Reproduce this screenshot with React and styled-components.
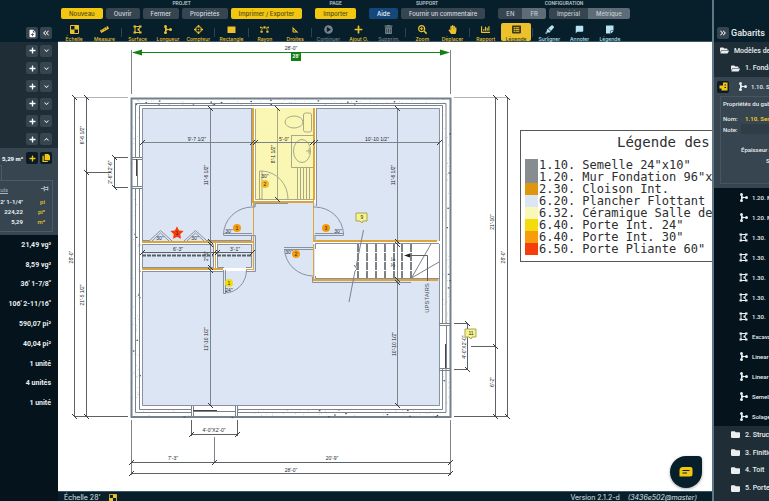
import React from "react";
import styled, { createGlobalStyle, css } from "styled-components";
import {
  FaRuler,
  FaBezierCurve,
  FaPlayCircle,
  FaPlus,
  FaTrashAlt,
  FaSearchPlus,
  FaHandPaper,
  FaChartBar,
  FaListAlt,
  FaHighlighter,
  FaFolder,
  FaFolderOpen,
} from "react-icons/fa";
import {
  MdNoteAdd,
  MdKeyboardDoubleArrowLeft,
  MdKeyboardDoubleArrowRight,
  MdKeyboardArrowDown,
  MdKeyboardArrowUp,
  MdSquareFoot,
  MdChatBubble,
  MdOutlinePushPin,
} from "react-icons/md";

const c = {
  navy: "#071f2b",
  deep: "#05141c",
  row: "#1f2e36",
  slate: "#36454f",
  slateLight: "#5d6c76",
  yellow: "#f3c70f",
  tool: "#ecc12c",
  sky: "#b9e3f5",
  text: "#e9eef1",
  edge: "#5f7684",
  blue: "#dce5f4",
  ink: "#4a5158",
  orange: "#dfa437",
};

const GlobalStyle = createGlobalStyle`
  * { box-sizing: border-box; }
  html, body, #root { height: 100%; }
  body { margin: 0; font-family: Roboto, "Liberation Sans", sans-serif; background: ${c.navy}; color: ${c.text}; }
  button, input { font: inherit; color: inherit; margin: 0; padding: 0; border: 0; }
  button { cursor: pointer; }
  svg { display: block; flex: none; }
`;

/* ---------- shell ---------- */

const Page = styled.div`
  display: grid;
  grid-template-columns: 58px minmax(0, 1fr) 57px;
  height: 100vh;
  overflow: hidden;
`;

const Side = styled.aside`
  display: flex;
  flex-direction: column;
  min-width: 0;
  overflow: hidden;
  background: ${(p) => (p.$right ? c.row : c.deep)};
`;

const SideHead = styled.header`
  display: flex;
  align-items: flex-end;
  flex: none;
  gap: 2px;
  height: 42px;
  padding: 0 6px 3px 3px;
  background: ${c.navy};
  justify-content: ${(p) => (p.$start ? "flex-start" : "flex-end")};
`;

const SideTitle = styled.h1`
  margin: 0;
  font-size: 9px;
  line-height: 12px;
  font-weight: 500;
`;

const Center = styled.main`
  display: flex;
  flex-direction: column;
  min-width: 0;
`;

const IconButton = styled.button`
  display: grid;
  place-items: center;
  flex: none;
  width: 12px;
  height: 12px;
  border-radius: 2px;
  background: ${(p) => (p.$dark ? "#0b1c26" : c.slate)};
  color: ${(p) => (p.$dark ? c.yellow : "#fff")};
`;

/* ---------- top bar ---------- */

const TopBar = styled.header`
  flex: none;
  height: 42px;
  padding-left: 1px;
  border-bottom: 1px solid #3d5663;
`;

const Groups = styled.div`
  display: flex;
  gap: 13px;
  padding-left: 2px;
`;

const Group = styled.section`
  display: flex;
  flex-direction: column;
  align-items: center;
`;

const GroupName = styled.h2`
  margin: 0;
  padding-top: 1px;
  height: 8px;
  font-size: 5px;
  line-height: 5px;
  font-weight: 500;
  color: #c3cdd3;
`;

const GroupRow = styled.div`
  display: flex;
  gap: 3px;
`;

const tones = {
  plain: css`background: ${c.slate}; color: #d5dce0;`,
  yellow: css`background: ${c.yellow}; color: #4d4a1d;`,
  blue: css`background: #14477a; color: #f0f5fa;`,
};

const Button = styled.button`
  height: 11px;
  padding: 0 8px;
  border-radius: 2px;
  font-family: Inter, Roboto, sans-serif;
  font-size: 6px;
  line-height: 11px;
  font-weight: 500;
  white-space: nowrap;
  ${(p) => tones[p.$tone || "plain"]}
`;

const Segments = styled.div`
  display: flex;
  overflow: hidden;
  border-radius: 2px;
`;

const Segment = styled(Button)`
  border-radius: 0;
  color: #c3ccd1;
  background: ${(p) => (p["aria-pressed"] ? c.slateLight : c.slate)};
`;

const Toolbar = styled.nav`
  display: flex;
  align-items: stretch;
  max-width: 566px;
  height: 18px;
  margin-top: 4px;
`;

const Tool = styled.button`
  display: flex;
  flex: 1 1 0;
  flex-direction: column;
  align-items: center;
  gap: 2px;
  min-width: 0;
  padding-top: 2px;
  border-radius: 2px;
  background: ${(p) => (p.$active ? c.tool : "transparent")};
  color: ${(p) => (p.$active ? "#3c3a18" : p.$tone === "sky" ? c.sky : c.tool)};
  font-family: Inter, Roboto, sans-serif;
  font-size: 5px;
  line-height: 6px;
  font-weight: 500;
  white-space: nowrap;
  &:disabled { color: #76838a; }
`;

const Divider = styled.span`
  flex: none;
  align-self: center;
  width: 1px;
  height: 9px;
  margin: 0 1px;
  background: #2b4450;
`;

/* ---------- tool icons ---------- */

const Icon = ({ children, size = 9 }) => (
  <svg width={size} height={size} viewBox="0 0 18 18" fill="currentColor" aria-hidden="true">{children}</svg>
);
const ScaleIcon = ({ size = 9 }) => (
  <Icon size={size}>
    <path d="M1 1h16v16H1z" fill="none" stroke="currentColor" strokeWidth="2" />
    <path d="M9 1h8v8H9zM1 9h8v8H1z" />
  </Icon>
);
const SurfaceIcon = ({ size = 9 }) => (
  <Icon size={size}>
    <path d="M4 3h11l-4 6 4 6H4z" fill="none" stroke="currentColor" strokeWidth="2" />
    <path d="M1 1h5v4H1zM12 1h5v4h-5zM1 13h5v4H1zM12 13h5v4h-5zM9 7h4v4H9z" />
  </Icon>
);
const LengthIcon = ({ size = 9 }) => (
  <Icon size={size}>
    <path d="M5 3v12M5 9h9" fill="none" stroke="currentColor" strokeWidth="2" />
    <circle cx="5" cy="3" r="3" /><circle cx="5" cy="15" r="3" /><circle cx="15" cy="9" r="3" />
    <path d="M5 5l6 4-6 4z" />
  </Icon>
);
const CounterIcon = () => (
  <Icon>
    <circle cx="9" cy="9" r="6" fill="none" stroke="currentColor" strokeWidth="2" />
    <path d="M9 0v5M9 13v5M0 9h5M13 9h5" stroke="currentColor" strokeWidth="3" />
    <circle cx="9" cy="9" r="1.5" />
  </Icon>
);
const RectIcon = () => <Icon><path d="M1 3h16v13H1z" /></Icon>;
const NoteIcon = () => <Icon><path d="M2 1h15v10h-6v6H2zM12 12h5l-5 5z" /></Icon>;
const CopyIcon = () => (
  <Icon size={8}><path d="M6 0h8l4 4v10H6zM1 4h3v12h9v2H1z" /></Icon>
);
const TemplateIcon = () => (
  <Icon size={9}><path d="M8 1h9v16H5v-4H1V7h7zM11 5v2h3V5zM11 10v2h3v-2z" fillRule="evenodd" /></Icon>
);

const tools = [
  [["Échelle", ScaleIcon], ["Measure", FaRuler]],
  [["Surface", SurfaceIcon], ["Longueur", LengthIcon], ["Compteur", CounterIcon]],
  [["Rectangle", RectIcon]],
  [["Rayon", FaBezierCurve], ["Droites", MdSquareFoot]],
  [["Continuer", FaPlayCircle, "off"], ["Ajout O.", FaPlus], ["Supprim.", FaTrashAlt, "off"]],
  [["Zoom", FaSearchPlus], ["Déplacer", FaHandPaper]],
  [["Rapport", FaChartBar], ["Légende", FaListAlt, "active"]],
  [["Surligner", FaHighlighter, "sky"], ["Annoter", MdChatBubble, "sky"], ["Légende", NoteIcon, "sky"]],
];

function Header() {
  return (
    <TopBar>
      <Groups>
        <Group>
          <GroupName>PROJET</GroupName>
          <GroupRow>
            <Button $tone="yellow">Nouveau</Button>
            <Button>Ouvrir</Button>
            <Button>Fermer</Button>
            <Button>Propriétés</Button>
            <Button $tone="yellow">Imprimer / Exporter</Button>
          </GroupRow>
        </Group>
        <Group>
          <GroupName>PAGE</GroupName>
          <GroupRow><Button $tone="yellow">Importer</Button></GroupRow>
        </Group>
        <Group>
          <GroupName>SUPPORT</GroupName>
          <GroupRow>
            <Button $tone="blue">Aide</Button>
            <Button>Fournir un commentaire</Button>
          </GroupRow>
        </Group>
        <Group>
          <GroupName>CONFIGURATION</GroupName>
          <GroupRow>
            <Segments role="group" aria-label="Langue">
              <Segment aria-pressed={false}>EN</Segment>
              <Segment aria-pressed={true}>FR</Segment>
            </Segments>
            <Segments role="group" aria-label="Unités">
              <Segment aria-pressed={false}>Impérial</Segment>
              <Segment aria-pressed={true}>Métrique</Segment>
            </Segments>
          </GroupRow>
        </Group>
      </Groups>
      <Toolbar>
        {tools.map((set, i) => (
          <React.Fragment key={i}>
            {i > 0 && <Divider />}
            {set.map(([name, Glyph, state]) => (
              <Tool key={name} $active={state === "active"} $tone={state} disabled={state === "off"}>
                <Glyph size={9} />
                {name}
              </Tool>
            ))}
          </React.Fragment>
        ))}
      </Toolbar>
    </TopBar>
  );
}

/* ---------- left panel ---------- */

const FolderRows = styled.ul`
  display: grid;
  grid-auto-rows: 1fr;
  flex: none;
  height: ${(p) => p.$height}px;
  margin: 0;
  padding: 0;
  list-style: none;
  background: ${c.row};
`;

const ActionRow = styled.li`
  display: flex;
  align-items: center;
  justify-content: flex-end;
  gap: 2px;
  padding-right: 6px;
`;

const Selected = styled.section`
  flex: none;
  height: 87px;
  padding-top: 4px;
  background: ${c.slate};
`;

const SelectedRow = styled.div`
  display: flex;
  align-items: center;
  justify-content: flex-end;
  gap: 2px;
  padding-right: 6px;
  font-size: 6px;
  font-weight: 700;
  white-space: nowrap;
`;

const Amount = styled.strong`
  margin-right: 1px;
`;

const CalcTab = styled.div`
  width: 2px;
  height: 15px;
  margin-top: 1px;
  border-right: 1px solid #4c5c66;
  border-top: 1px solid #4c5c66;
`;

const CalcBox = styled.div`
  height: 52px;
  margin-right: 5px;
  padding: 3px 3px 0 0;
  border: 1px solid #4c5c66;
  border-left: 0;
`;

const CalcHead = styled.div`
  display: flex;
  justify-content: space-between;
  height: 13px;
`;

const CalcLink = styled.a`
  display: flex;
  justify-content: flex-end;
  width: 8px;
  font-size: 6px;
  line-height: 11px;
  color: #aab6bd;
`;

const PinIcon = styled(MdOutlinePushPin)`
  color: #c9d2d7;
  transform: rotate(90deg);
`;

const CalcTable = styled.table`
  width: 100%;
  border-collapse: collapse;
  font-size: 6px;
  line-height: 10px;
  font-weight: 700;
  td { padding: 0; text-align: right; white-space: nowrap; }
  td:first-child { width: 23px; }
  td:last-child { padding-right: 4px; color: ${c.tool}; font-weight: 500; }
`;

const Totals = styled.ul`
  display: grid;
  grid-auto-rows: 1fr;
  flex: none;
  height: 178px;
  margin: 0;
  padding: 0 7px 0 0;
  list-style: none;
  text-align: right;
  font-size: 7px;
  font-weight: 700;
  white-space: nowrap;
`;

const Total = styled.li`
  display: flex;
  align-items: center;
  justify-content: flex-end;
`;

const totals = ["21,49 vg²", "8,59 vg²", "36' 1-7/8\"", "106' 2-11/16\"", "590,07 pi²", "40,04 pi²", "1 unité", "4 unités", "1 unité"];
const calcs = [["2' 1-1/4\"", "pi"], ["224,22", "pi²"], ["5,29", "m³"]];

function LeftPanel() {
  return (
    <Side>
      <SideHead>
        <IconButton aria-label="Ajouter un document"><MdNoteAdd size={9} /></IconButton>
        <IconButton aria-label="Réduire"><MdKeyboardDoubleArrowLeft size={10} /></IconButton>
      </SideHead>
      <FolderRows $height={106}>
        {[0, 1, 2, 3, 4, 5].map((n) => (
          <ActionRow key={n}>
            <IconButton aria-label="Ajouter"><FaPlus size={7} /></IconButton>
            <IconButton aria-label="Ouvrir ou fermer">
              {n === 5 ? <MdKeyboardArrowUp size={9} /> : <MdKeyboardArrowDown size={9} />}
            </IconButton>
          </ActionRow>
        ))}
      </FolderRows>
      <Selected>
        <SelectedRow>
          <Amount>5,29 m³</Amount>
          <IconButton $dark aria-label="Ajouter"><FaPlus size={7} /></IconButton>
          <IconButton $dark aria-label="Copier"><CopyIcon /></IconButton>
        </SelectedRow>
        <CalcTab />
        <CalcBox>
          <CalcHead>
            <CalcLink href="#calculs">Calculs</CalcLink>
            <PinIcon size={9} />
          </CalcHead>
          <CalcTable>
            <tbody>
              {calcs.map(([v, u]) => <tr key={u}><td>{v}</td><td>{u}</td></tr>)}
            </tbody>
          </CalcTable>
        </CalcBox>
      </Selected>
      <Totals>{totals.map((t, i) => <Total key={i}>{t}</Total>)}</Totals>
    </Side>
  );
}

/* ---------- right panel ---------- */

const RightSide = styled(Side)`
  border-left: 2px solid ${c.edge};
`;

const TreeRow = styled.li`
  display: flex;
  align-items: center;
  gap: ${(p) => (p.$small ? 4 : 5)}px;
  padding-left: ${(p) => p.$indent}px;
  font-size: ${(p) => (p.$small ? 6 : 7)}px;
  font-weight: 500;
  white-space: nowrap;
`;

const Template = styled.section`
  flex: none;
  height: 111px;
  background: ${c.slate};
`;

const TemplateHead = styled.div`
  display: flex;
  align-items: center;
  gap: 4px;
  height: 19px;
  padding-left: 3px;
  font-size: 6px;
  font-weight: 500;
  white-space: nowrap;
`;

const TemplateMark = styled(IconButton)`
  margin-right: 5px;
`;

const Properties = styled.fieldset`
  min-width: 0;
  height: 88px;
  margin: 0 0 0 6px;
  padding: 1px 0 0 2px;
  border: 1px solid #46565f;
  border-right: 0;
  font-size: 6px;
  line-height: 11px;
  font-weight: 500;
  white-space: nowrap;
`;

const PropTitle = styled.div`
  height: 15px;
`;

const PropRow = styled.label`
  display: grid;
  grid-template-columns: 18px minmax(0, 1fr);
  height: 11px;
`;

const PropInput = styled.input`
  width: 100%;
  height: 10px;
  padding-left: 4px;
  border-radius: 1px;
  background: ${(p) => (p.$filled ? "transparent" : "#2f3d47")};
  color: ${c.tool};
  font-weight: 700;
`;

const PropNote = styled.div`
  padding-left: ${(p) => p.$indent}px;
  margin-top: ${(p) => p.$gap || 0}px;
`;

const ItemRows = styled(FolderRows)`
  background: ${c.deep};
`;

const items = [
  ["1.20. Mur", 0], ["1.20. Mur", 0], ["1.30.", 1], ["1.30.", 1],
  ["1.30.", 1], ["1.30.", 1], ["1.30.", 1], ["Excavation", 1],
  ["Linear", 0], ["Linear", 0], ["Semelle", 0], ["Solage", 0],
];

function RightPanel() {
  return (
    <RightSide $right>
      <SideHead $start>
        <IconButton aria-label="Réduire"><MdKeyboardDoubleArrowRight size={10} /></IconButton>
        <SideTitle>Gabarits</SideTitle>
      </SideHead>
      <FolderRows $height={35}>
        <TreeRow $indent={6}><FaFolderOpen size={9} />Modèles de</TreeRow>
        <TreeRow $indent={17}><FaFolderOpen size={9} />1. Fondation</TreeRow>
      </FolderRows>
      <Template>
        <TemplateHead>
          <TemplateMark $dark aria-label="Gabarit actif"><TemplateIcon /></TemplateMark>
          <LengthIcon />
          1.10. Semelle
        </TemplateHead>
        <Properties>
          <PropTitle>Propriétés du gabarit</PropTitle>
          <PropRow>Nom:<PropInput $filled defaultValue="1.10. Semelle" /></PropRow>
          <PropRow>Note:<PropInput /></PropRow>
          <PropNote $indent={18} $gap={9}>Épaisseur de</PropNote>
          <PropNote $indent={43}>S</PropNote>
        </Properties>
      </Template>
      <ItemRows $height={238}>
        {items.map(([name, area], i) => (
          <TreeRow key={i} $small $indent={25}>
            {area ? <SurfaceIcon /> : <LengthIcon />}
            {name}
          </TreeRow>
        ))}
      </ItemRows>
      <FolderRows $height={71}>
        {["2. Structure", "3. Finition", "4. Toit", "5. Portes"].map((t) => (
          <TreeRow key={t} $indent={17}><FaFolder size={9} />{t}</TreeRow>
        ))}
      </FolderRows>
    </RightSide>
  );
}

/* ---------- floor plan ---------- */

const Plan = styled.svg`
  .dim { stroke: #5c6166; stroke-width: 1; fill: none; }
  .thin { stroke: #7d8389; stroke-width: 1; fill: none; }
  .soft { stroke: #b0b4b8; stroke-width: 1; fill: none; }
  .tick { stroke: #33383c; stroke-width: 1; }
  .ink { stroke: #8791a0; stroke-width: 1; fill: none; }
  .wall { stroke: #78838d; stroke-width: 1; fill: none; }
  .gap { stroke: #fff; stroke-width: 3; fill: none; }
  .orange { stroke: ${c.orange}; stroke-width: 1; fill: none; }
  .orange.thick { stroke-width: 2; }
  .dash { stroke: #7c8287; stroke-width: 2; stroke-dasharray: 8 1; fill: none; }
  .bath { stroke: #a9a987; stroke-width: 1; fill: none; }
  text { font-family: "Liberation Sans", Arial, sans-serif; font-size: 5px; fill: #24282c; text-anchor: middle; }
  text.large { font-size: 6px; fill: #4b5056; }
  text.badge { fill: #fff; font-weight: 700; }
`;

const H = ({ x1, x2, y, cls = "dim" }) => <path className={cls} d={`M${x1} ${y}.5H${x2}`} />;
const V = ({ x, y1, y2, cls = "dim" }) => <path className={cls} d={`M${x}.5 ${y1}V${y2}`} />;
const Tick = ({ x, y, flip }) => (
  <path className="tick" d={flip ? `M${x - 2} ${y - 2}l5 5` : `M${x - 2} ${y + 3}l5 -5`} />
);
const Turned = ({ x, y, children, large }) => (
  <text className={large ? "large" : undefined} transform={`translate(${x} ${y}) rotate(-90)`}>{children}</text>
);
const Pin = ({ x, y, fill, children }) => (
  <g><circle cx={x} cy={y} r="4" fill={fill} /><text x={x} y={y + 2}>{children}</text></g>
);
const Note = ({ x, y, children }) => (
  <g>
    <path d={`M${x} ${y}h11v8h-4l-1 2-2-2h-4z`} fill="#f6f28e" stroke="#a9a54e" />
    <text x={x + 6} y={y + 6}>{children}</text>
  </g>
);

function specks() {
  const out = [];
  let s = 7;
  const rnd = () => (s = (s * 16807) % 2147483647) / 2147483647;
  for (let i = 0; i < 300; i++) {
    const t = rnd() * 310;
    const d = rnd() * 8;
    const side = i % 4;
    const x = side === 0 ? 132 + d : side === 1 ? 442 + d : 135 + t;
    const y = side === 2 ? 99 + d * 0.7 : side === 3 ? 409 + d : 101 + t;
    const r = rnd() > 0.8 ? 1.6 : 0.6;
    out.push(<rect key={i} x={x} y={y} width={r} height={r > 1 ? 1.2 : 0.6} fill={r > 1 ? "#4c5155" : "#8c9195"} />);
  }
  return out;
}

function FloorPlan() {
  return (
    <Plan width="654" height="449" viewBox="58 42 654 449" role="img" aria-label="Plan du sous-sol">
      {/* foundation */}
      <rect x="131.5" y="98.5" width="319" height="318.5" fill="#fff" stroke="#74808a" strokeWidth="2" />
      {specks()}
      <path className="wall" d="M135.500 103.500H446V412.500H135.500zM139.500 105.500H442.500V409.500H139.500z" />
      <rect x="141" y="107" width="300" height="301" fill="#fff" />
      <rect x="142" y="108" width="298" height="298" fill={c.blue} />
      <path className="ink" d="M142.500 108.500H439.500V405.500H142.500z" />

      {/* window openings */}
      <rect x="191" y="406" width="46" height="11" fill="#fff" />
      <path className="wall" d="M191.500 406V417M193.500 406V417M235.500 406V417M237.500 406V417M193 411.500H235M191 416.500H238" />
      <path d="M193 410.500H217" stroke="#444" />
      <rect x="133" y="158" width="8" height="30" fill="#fff" />
      <path className="wall" d="M131 157.500H142M131 159.500H142M131 186.500H142M131 188.500H142M137.500 159V187" />
      <path d="M136.500 159V176" stroke="#444" />
      <rect x="440" y="324" width="9" height="45" fill="#fff" />
      <path className="wall" d="M439 323.500H450M439 325.500H450M439 368.500H450M439 370.500H450M446.500 325V369" />
      <path d="M445.500 344V368" stroke="#444" />

      {/* bathroom */}
      <rect x="252" y="108" width="64" height="95" fill="#fff" />
      <rect x="255" y="108" width="58" height="92" fill="#faf7b5" />
      <g className="bath">
        <path d="M255.500 109V199.500H313M277.500 108V200" />
        <ellipse cx="294" cy="122" rx="9" ry="6" />
        <rect x="303.500" y="113" width="8" height="19" rx="2" />
        <path d="M291.500 135.500H313M291.500 135V167.500H313" />
        <ellipse cx="302" cy="151" rx="8.500" ry="11.500" />
        <path d="M306 151h5M309 148v6M297.500 168V199M300.500 168V199M303.500 168V199M306.500 168V199M309.500 168V199" />
        <path d="M259.500 171H262V199H259.500zM262 171A27 28 0 0 1 288 199" />
      </g>
      <path className="orange thick" d="M253 108V202H313M314 108V200" />
      <path className="orange" d="M313.500 200V280" />
      <path className="ink" d="M251.500 108V206M316.500 108V206M255 206.500V203.500M255 203.500H288" />
      <path className="orange" d="M253.500 202V270" />

      {/* bottom of left room and closets */}
      <path className="gap" d="M142 242.500H253M142 269.500H253M215.500 243V269M313 242.500H440" />
      <path className="orange thick" d="M142 242H253M142 269H223" />
      <path className="orange" d="M246 269.500H253M215.500 242V269" />
      <path className="ink" d="M150 240.500H142M206 240.500H251.500V235M142 244.500H213.500V267.500H142M217.500 244.500H252M217.500 244V267.500H224M246 267.500H251.500V244M142 271.500H223.500M246 271.500H255.500V235.500H252" />
      <path d="M142 255.500H213M217 255.500H251" stroke="#586069" strokeWidth="2" strokeDasharray="4 1" />
      <H x1={142} x2={253} y={252} />

      {/* doors */}
      <g className="ink">
        <path d="M223.500 235.500H252M223.500 233.500H252M223.500 235A29 28 0 0 1 252 207M252 207H255V203" />
        <path d="M284 247.500H313M284 249.500H313M284.500 249A29 28 0 0 0 313 276" />
        <path d="M315 235.500H343.500V233.500H315M343.500 234A29 28 0 0 0 315 207H313M315 240V235" />
        <path d="M223.500 270V293.500H225.500V270M246.500 270A22 23 0 0 1 225 293" />
        <path d="M149 241L160.500 230.500L172 241M152 241L160.500 233L169 241M184 241L195.500 230.500L207 241M187 241L195.500 233L204 241" />
      </g>

      {/* stairs */}
      <rect x="315" y="244" width="124" height="34" fill="#fff" />
      <path className="dash" d="M358 244V278M367 244V278M376 244V278M385 244V278M394 244V278M402 244V278M411 244V278" />
      <path className="thin" d="M411.500 278L431 244M411.500 278L439 262" />
      <path className="orange thick" d="M313 241H437M313 280H438" />
      <path className="ink" d="M315 243.500H439M315.500 244V249M315.500 276V278.500H439M312.500 277V282.500H411" />
      <path className="dim" d="M427.500 281V255.500H408" />
      <path d="M404 255.500l6-2v4z" fill="#222" />
      <path className="thin" d="M363.500 230L356 267l-2-2 3 4-2 2L349 302" />

      {/* inside dimensions */}
      <H x1={142} x2={440} y={142} cls="thin" />
      <V x={210} y1={108} y2={405} cls="thin" />
      <V x={397} y1={108} y2={405} cls="thin" />
      {[142, 252, 255, 312, 315, 439].map((x) => <Tick key={x} x={x} y={142} />)}
      {[142, 214, 217, 252].map((x) => <Tick key={x} x={x} y={252} />)}
      {[108, 241, 244, 267, 270, 405].map((y) => <Tick key={y} x={210} y={y} flip />)}
      {[108, 241, 244, 279, 282, 405].map((y) => <Tick key={y} x={397} y={y} flip />)}
      <Tick x={277} y={108} flip /><Tick x={277} y={199} flip />
      <text x="197" y="141">9'-7 1/2"</text>
      <text x="284" y="141">5'-0"</text>
      <text x="377" y="141">10'-10 1/2"</text>
      <text x="178" y="251">6'-3"</text>
      <text x="235" y="251">3'-1"</text>
      <Turned x={208} y={175}>11'-6 1/2"</Turned>
      <Turned x={395} y={175}>11'-6 1/2"</Turned>
      <Turned x={275} y={154}>8'-1 1/2"</Turned>
      <Turned x={208} y={256}>2'-1"</Turned>
      <Turned x={395} y={262}>3'-1"</Turned>
      <Turned x={208} y={339}>11'-10 1/2"</Turned>
      <Turned x={396} y={344}>10'-10 1/2"</Turned>
      <Turned x={429} y={298} large>UPSTAIRS</Turned>
      <text x="160" y="240">30"</text>
      <text x="195" y="240">30"</text>
      <text x="229" y="233">30"</text>
      <text x="265" y="178">30"</text>
      <text x="289" y="254">30"</text>
      <text x="338" y="233">30"</text>
      <text x="229" y="292">24"</text>

      {/* counters and notes */}
      <Pin x={265} y={184} fill="#f2bc2c">2</Pin>
      <Pin x={237} y={228} fill="#f79b0c">1</Pin>
      <Pin x={296} y={254} fill="#f79b0c">2</Pin>
      <Pin x={326} y={228} fill="#f79b0c">3</Pin>
      <Pin x={229} y={283} fill="#f3dc0e">1</Pin>
      <path d="M177 228l1.500 3 3.500 .5-2.500 2.500 .5 3.500-3-1.500-3 1.500.5-3.500-2.500-2.500 3.500-.5z" fill="#f53b0c" stroke="#f53b0c" strokeWidth="1.500" />
      <text x="177" y="235">1</text>
      <Note x={356} y={213}>9</Note>

      {/* left dimensions */}
      <V x={74} y1={98} y2={417} />
      <V x={86} y1={98} y2={417} />
      <H x1={74} x2={128} y={97} cls="soft" />
      <H x1={74} x2={128} y={416} />
      <H x1={86} x2={111} y={172} />
      <V x={114} y1={157} y2={188} />
      <H x1={114} x2={128} y={157} />
      <H x1={114} x2={128} y={187} />
      {[[74, 97], [86, 97], [86, 172], [114, 157], [114, 187], [74, 416], [86, 416]].map(([x, y]) => <Tick key={`${x}-${y}`} x={x} y={y} flip />)}
      <Turned x={73} y={257}>28'-0"</Turned>
      <Turned x={84} y={135}>6'-6 1/2"</Turned>
      <Turned x={84} y={295}>21'-5 1/2"</Turned>
      <Turned x={112} y={172}>2'-6"X2'-6"</Turned>

      {/* right dimensions */}
      <V x={495} y1={98} y2={417} />
      <V x={507} y1={98} y2={417} />
      <H x1={454} x2={508} y={97} cls="soft" />
      <H x1={454} x2={508} y={416} />
      <H x1={471} x2={496} y={346} />
      <V x={467} y1={323} y2={370} />
      <H x1={454} x2={468} y={323} />
      <H x1={454} x2={468} y={369} />
      {[[495, 97], [507, 97], [495, 346], [467, 323], [467, 369], [495, 416], [507, 416]].map(([x, y]) => <Tick key={`${x}-${y}`} x={x} y={y} flip />)}
      <Turned x={494} y={222}>21'-10"</Turned>
      <Turned x={505} y={257}>28'-0"</Turned>
      <Turned x={494} y={382}>6'-2"</Turned>
      <Turned x={466} y={347}>4'-0"X2'-0"</Turned>
      <Note x={465} y={329}>11</Note>

      {/* bottom dimensions */}
      <H x1={191} x2={238} y={434} />
      <V x={191} y1={420} y2={436} />
      <V x={237} y1={420} y2={436} />
      <H x1={131} x2={451} y={462} />
      <H x1={131} x2={451} y={473} />
      <V x={131} y1={420} y2={475} cls="thin" />
      <V x={450} y1={420} y2={475} cls="thin" />
      <V x={214} y1={437} y2={463} cls="thin" />
      {[[191, 434], [237, 434], [131, 462], [214, 462], [450, 462], [131, 473], [450, 473]].map(([x, y]) => <Tick key={`${x}-${y}`} x={x} y={y} />)}
      <text x="214" y="432">4'-0"X2'-0"</text>
      <text x="173" y="460">7'-3"</text>
      <text x="332" y="460">20'-9"</text>
      <text x="291" y="472">28'-0"</text>

      {/* scale line */}
      <V x={131} y1={50} y2={94} cls="thin" />
      <V x={450} y1={50} y2={94} cls="thin" />
      <path d="M133 52.500H448" stroke="#178217" />
      <path d="M132 52.500l10-3v6zM450 52.500l-10-3v6z" fill="#128012" />
      <text x="291" y="50">28'-0"</text>
      <rect x="291" y="52" width="10" height="9" fill="#128012" />
      <text className="badge" x="296" y="58">28'</text>
    </Plan>
  );
}

/* ---------- canvas ---------- */

const Canvas = styled.div`
  position: relative;
  flex: 1;
  min-height: 0;
  overflow: hidden;
  background: #fff;
`;

const Legend = styled.section`
  position: absolute;
  top: 88px;
  left: 462px;
  right: 0;
  padding: 3px 0 6px 4px;
  overflow: hidden;
  border: 1px solid #55595d;
  border-right: 0;
  background: #fff;
  color: #2c2e30;
  font-family: "DejaVu Sans Mono", monospace;
  white-space: nowrap;
`;

const LegendTitle = styled.h2`
  margin: 0 0 8px 92px;
  font-size: 14px;
  line-height: 17px;
  font-weight: 400;
`;

const LegendList = styled.ul`
  margin: 0;
  padding: 0;
  list-style: none;
  font-size: 12px;
  line-height: 12px;
`;

const LegendItem = styled.li`
  display: flex;
  gap: 1px;
`;

const Swatch = styled.span`
  flex: none;
  width: 13px;
  height: 12px;
  background: ${(p) => p.$color};
`;

const ChatButton = styled.button`
  position: absolute;
  right: 10px;
  bottom: 3px;
  display: grid;
  place-items: center;
  width: 32px;
  height: 32px;
  border-radius: 16px 4px 16px 16px;
  background: ${c.navy};
  box-shadow: 0 1px 3px rgba(0, 0, 0, 0.35);
`;

const StatusBar = styled.footer`
  display: flex;
  align-items: center;
  flex: none;
  gap: 8px;
  height: 11px;
  padding: 1px 15px 0 6px;
  border-top: 1px solid #3d5663;
  font-family: Inter, Roboto, sans-serif;
  font-size: 7px;
  line-height: 9px;
  color: #dbe3e7;
  white-space: nowrap;
`;

const ScaleMark = styled.span`
  color: ${c.tool};
`;

const Version = styled.span`
  margin-left: auto;
`;

const legend = [
  ["#878c91", "1.10. Semelle 24\"x10\""],
  ["#878c91", "1.20. Mur Fondation 96\"x"],
  ["#dd960e", "2.30. Cloison Int."],
  ["#dbe5f6", "6.20. Plancher Flottant"],
  ["#faf8b8", "6.32. Céramique Salle de"],
  ["#f4dc0c", "6.40. Porte Int. 24\""],
  ["#f79d0c", "6.40. Porte Int. 30\""],
  ["#f73d0c", "6.50. Porte Pliante 60\""],
];

export default function App() {
  return (
    <>
      <GlobalStyle />
      <Page>
        <LeftPanel />
        <Center>
          <Header />
          <Canvas>
            <FloorPlan />
            <Legend>
              <LegendTitle>Légende des</LegendTitle>
              <LegendList>
                {legend.map(([color, name]) => (
                  <LegendItem key={name}><Swatch $color={color} />{name}</LegendItem>
                ))}
              </LegendList>
            </Legend>
            <ChatButton aria-label="Clavardage">
              <svg width="14" height="12" viewBox="0 0 28 24" aria-hidden="true">
                <path d="M8 2h15q4 0 4 4v10q0 5-5 5H2q-1 0-1-1V9q0-7 7-7z" fill={c.yellow} />
                <path d="M7 9h14M7 14h9" stroke={c.navy} strokeWidth="2" />
              </svg>
            </ChatButton>
          </Canvas>
          <StatusBar>
            <span>Échelle 28'</span>
            <ScaleMark><ScaleIcon size={8} /></ScaleMark>
            <Version>Version 2.1.2-d</Version>
            <em>(3436e502@master)</em>
          </StatusBar>
        </Center>
        <RightPanel />
      </Page>
    </>
  );
}
